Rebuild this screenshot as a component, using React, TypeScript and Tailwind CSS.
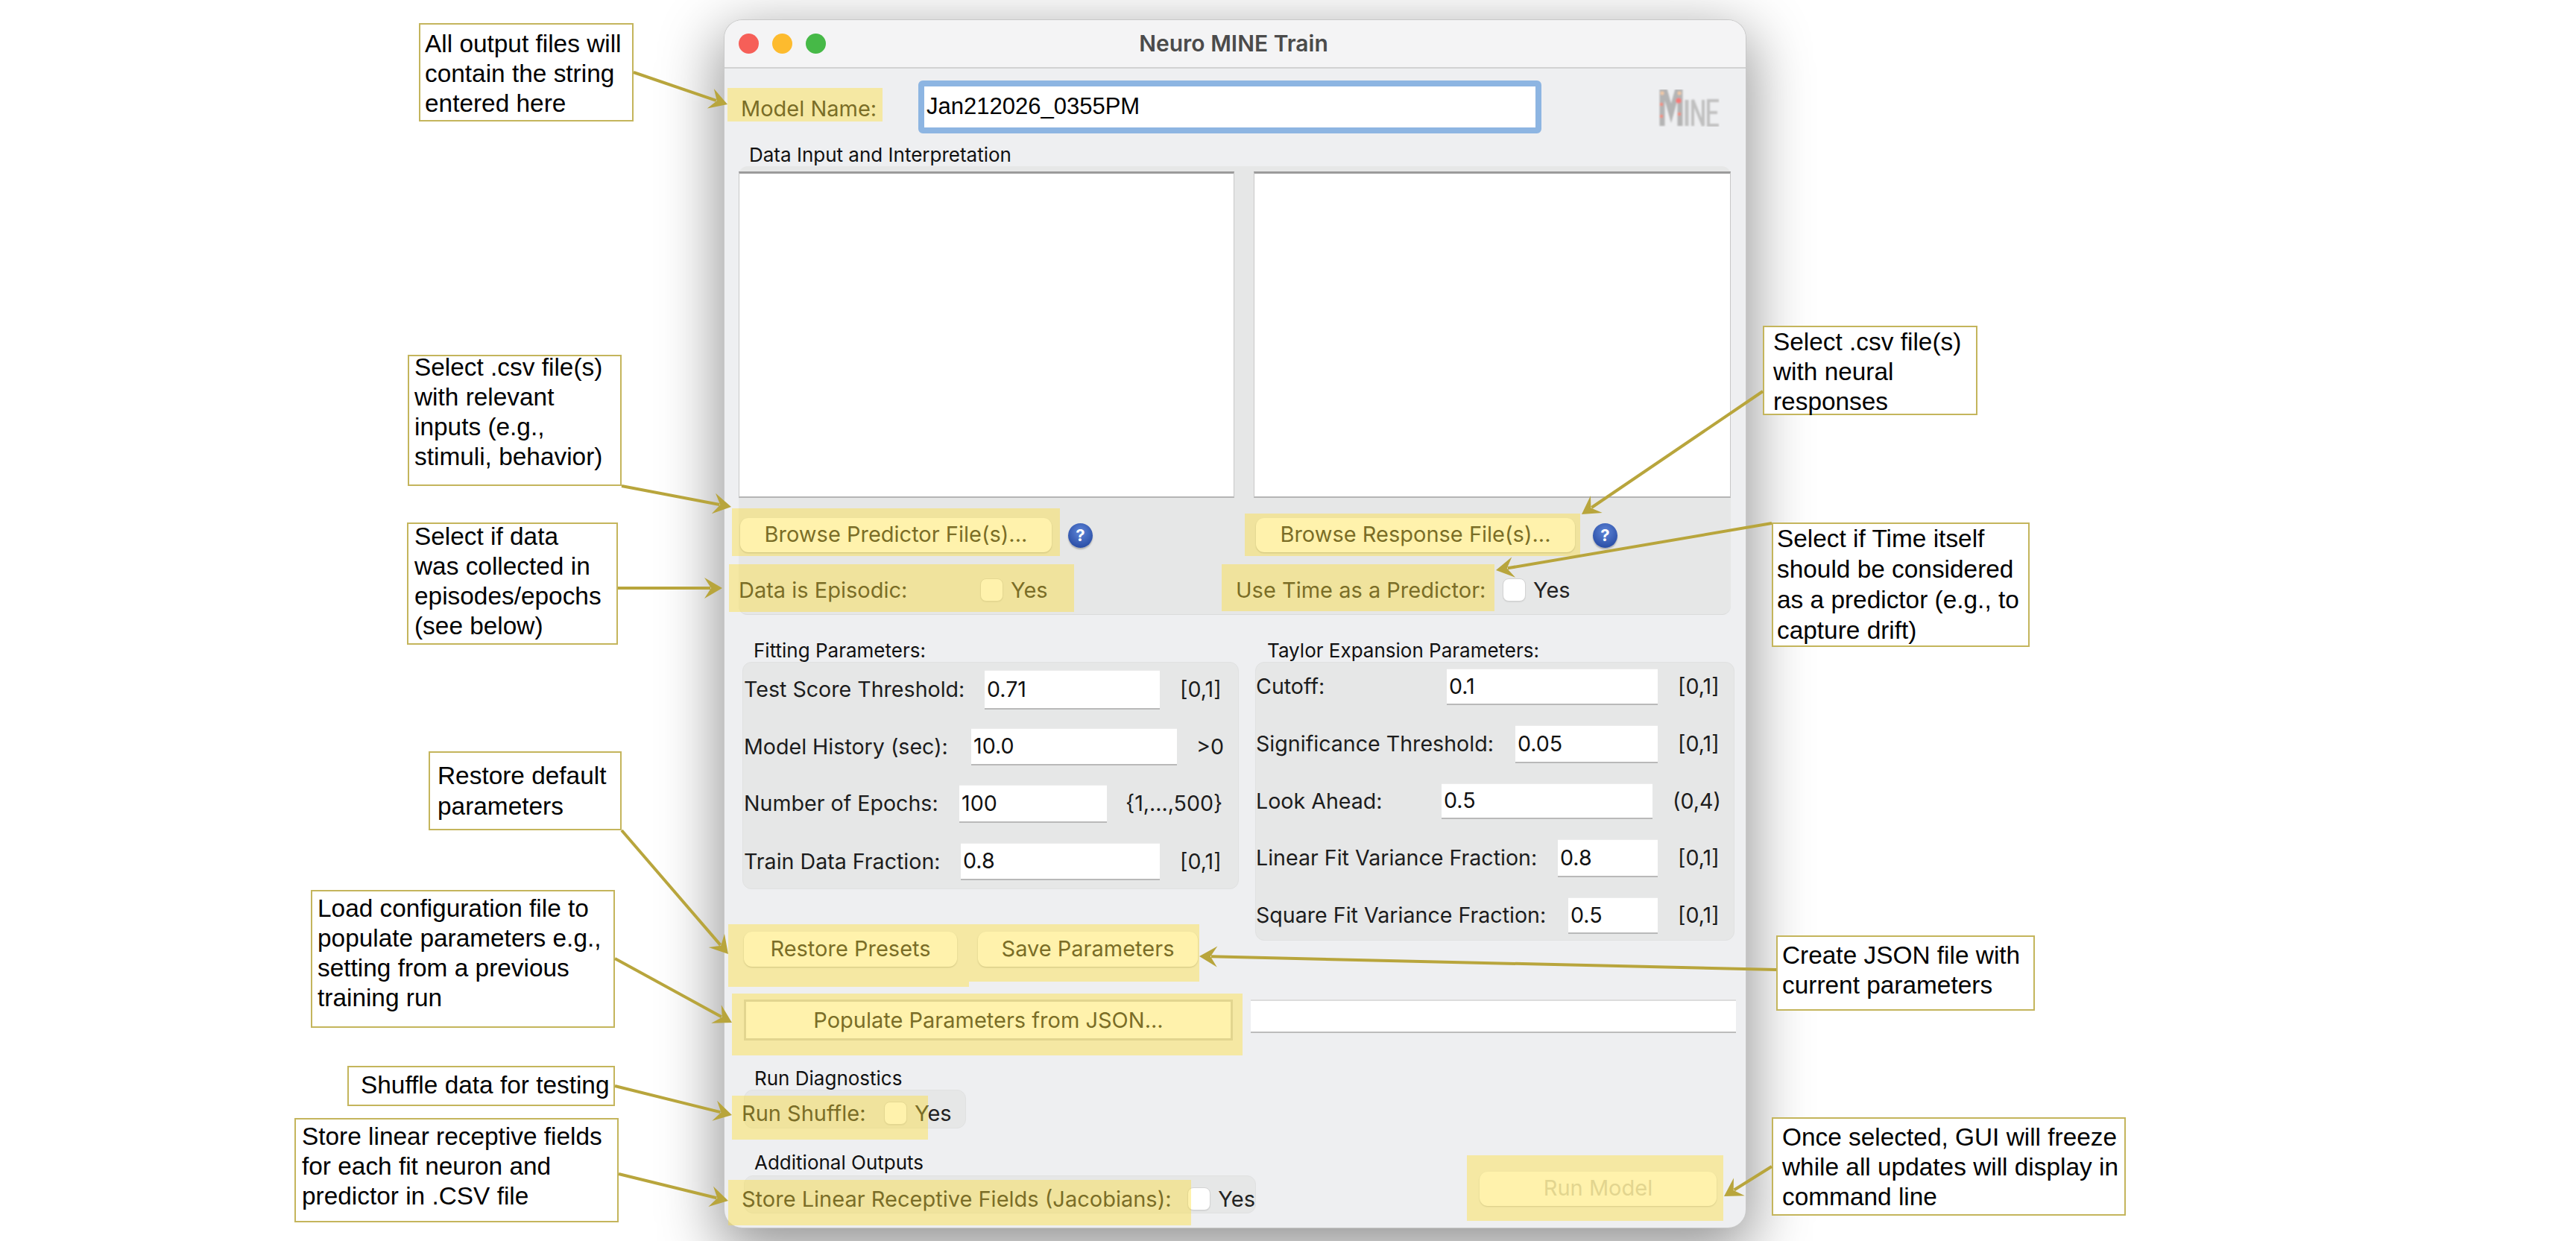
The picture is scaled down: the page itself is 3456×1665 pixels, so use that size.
import React from "react";

const UI = "[font-family:Inter,sans-serif]";
const ARIAL = "[font-family:'Liberation_Sans',Arial,sans-serif]";

type Row = { label: string; value: string; suffix: string; row: string; labelW: string; input: string; suffixC: string };

const fitting: Row[] = [
  { label: "Test Score Threshold:", value: "0.71", suffix: "[0,1]", row: "", labelW: "w-[324px] pl-[1px]", input: "w-[235px] h-[53px]", suffixC: "ml-[27px]" },
  { label: "Model History (sec):", value: "10.0", suffix: ">0", row: "mt-[25px]", labelW: "w-[306px] pl-[1px]", input: "w-[276px] h-[50px]", suffixC: "ml-[26px]" },
  { label: "Number of Epochs:", value: "100", suffix: "{1,...,500}", row: "mt-[26px]", labelW: "w-[290px] pl-[1px]", input: "w-[198px] h-[51px]", suffixC: "ml-[25px]" },
  { label: "Train Data Fraction:", value: "0.8", suffix: "[0,1]", row: "mt-[27px]", labelW: "w-[292px] pl-[1px]", input: "w-[267px] h-[50px]", suffixC: "ml-[27px]" },
];

const taylor: Row[] = [
  { label: "Cutoff:", value: "0.1", suffix: "[0,1]", row: "", labelW: "w-[256px]", input: "w-[283px] h-[49px]", suffixC: "ml-[27px]" },
  { label: "Significance Threshold:", value: "0.05", suffix: "[0,1]", row: "mt-[27px]", labelW: "w-[348px]", input: "w-[191px] h-[51px]", suffixC: "ml-[27px]" },
  { label: "Look Ahead:", value: "0.5", suffix: "(0,4)", row: "mt-[27px]", labelW: "w-[249px]", input: "w-[283px] h-[48px]", suffixC: "ml-[27px]" },
  { label: "Linear Fit Variance Fraction:", value: "0.8", suffix: "[0,1]", row: "mt-[27px]", labelW: "w-[405px]", input: "w-[134px] h-[51px]", suffixC: "ml-[27px]" },
  { label: "Square Fit Variance Fraction:", value: "0.5", suffix: "[0,1]", row: "mt-[27px]", labelW: "w-[419px]", input: "w-[120px] h-[49px]", suffixC: "ml-[27px]" },
];

const highlights = [
  "left-[976px] top-[118px] w-[208px] h-[45px]",
  "left-[982px] top-[682px] w-[440px] h-[64px]",
  "left-[978px] top-[757px] w-[463px] h-[64px]",
  "left-[1670px] top-[689px] w-[450px] h-[57px]",
  "left-[1639px] top-[757px] w-[366px] h-[63px]",
  "left-[977px] top-[1240px] w-[323px] h-[84px]",
  "left-[1300px] top-[1240px] w-[309px] h-[77px]",
  "left-[982px] top-[1333px] w-[685px] h-[83px]",
  "left-[982px] top-[1470px] w-[263px] h-[59px]",
  "left-[977px] top-[1583px] w-[621px] h-[61px]",
  "left-[1968px] top-[1550px] w-[344px] h-[88px]",
];

const callouts = [
  { box: "left-[562px] top-[31px] w-[288px] h-[132px]", text: "mt-[6px] ml-[6px] leading-[40px]", lines: ["All output files will", "contain the string", "entered here"] },
  { box: "left-[547px] top-[476px] w-[287px] h-[176px]", text: "-mt-[5px] ml-[7px] leading-[40px]", lines: ["Select .csv file(s)", "with relevant", "inputs (e.g.,", "stimuli, behavior)"] },
  { box: "left-[546px] top-[701px] w-[283px] h-[164px]", text: "-mt-[3px] ml-[8px] leading-[40px]", lines: ["Select if data", "was collected in", "episodes/epochs", "(see below)"] },
  { box: "left-[575px] top-[1008px] w-[259px] h-[106px]", text: "mt-[10px] ml-[10px] leading-[41px]", lines: ["Restore default", "parameters"] },
  { box: "left-[417px] top-[1194px] w-[408px] h-[185px]", text: "mt-[3px] ml-[7px] leading-[40px]", lines: ["Load configuration file to", "populate parameters e.g.,", "setting from a previous", "training run"] },
  { box: "left-[466px] top-[1430px] w-[359px] h-[54px]", text: "mt-[4px] ml-[16px] leading-[40px]", lines: ["Shuffle data for testing"] },
  { box: "left-[395px] top-[1500px] w-[435px] h-[140px]", text: "mt-[3px] ml-[8px] leading-[40px]", lines: ["Store linear receptive fields", "for each fit neuron and", "predictor in .CSV file"] },
  { box: "left-[2365px] top-[437px] w-[288px] h-[120px]", text: "mt-0 ml-[12px] leading-[40px]", lines: ["Select .csv file(s)", "with neural", "responses"] },
  { box: "left-[2377px] top-[701px] w-[346px] h-[167px]", text: "-mt-[1px] ml-[5px] leading-[41px]", lines: ["Select if Time itself", "should be considered", "as a predictor (e.g., to", "capture drift)"] },
  { box: "left-[2383px] top-[1255px] w-[347px] h-[101px]", text: "mt-[5px] ml-[6px] leading-[40px]", lines: ["Create JSON file with", "current parameters"] },
  { box: "left-[2377px] top-[1499px] w-[475px] h-[132px]", text: "mt-[5px] ml-[12px] leading-[40px]", lines: ["Once selected, GUI will freeze", "while all updates will display in", "command line"] },
];

const arrows: [number, number, number, number][] = [
  [850, 97, 976, 140],
  [834, 652, 981, 680],
  [829, 789, 969, 789],
  [2365, 525, 2122, 690],
  [2377, 702, 2007, 765],
  [834, 1114, 977, 1280],
  [825, 1286, 982, 1372],
  [825, 1457, 982, 1496],
  [830, 1575, 977, 1611],
  [2383, 1301, 1609, 1283],
  [2377, 1565, 2313, 1605],
];

function headPoints(x1: number, y1: number, x2: number, y2: number) {
  const len = Math.hypot(x2 - x1, y2 - y1);
  const ux = (x2 - x1) / len;
  const uy = (y2 - y1) / len;
  const px = -uy;
  const py = ux;
  const back = 24;
  const half = 14;
  const notch = 15;
  const a = [x2 - ux * back + px * half, y2 - uy * back + py * half];
  const b = [x2 - ux * back - px * half, y2 - uy * back - py * half];
  const n = [x2 - ux * notch, y2 - uy * notch];
  return `${x2},${y2} ${a[0]},${a[1]} ${n[0]},${n[1]} ${b[0]},${b[1]}`;
}

function Field({ value, className }: { value: string; className: string }) {
  return (
    <div className={`${className} box-border bg-white border-b-[2px] border-b-[#b9b9b9] border-t border-t-[#ececec] pl-[3px] flex items-center text-[28.6px] text-[#111] ${UI}`}>
      {value}
    </div>
  );
}

function ParamRow({ r }: { r: Row }) {
  return (
    <div className={`flex items-center ${r.row}`}>
      <div className={`${r.labelW} text-[28.6px] text-[#1c1c1c] whitespace-nowrap`}>{r.label}</div>
      <Field value={r.value} className={r.input} />
      <div className={`${r.suffixC} text-[28.6px] text-[#1c1c1c] whitespace-nowrap`}>{r.suffix}</div>
    </div>
  );
}

function Pill({ children, className }: { children: React.ReactNode; className: string }) {
  return (
    <div className={`${className} box-border pb-[2px] rounded-[11px] bg-white shadow-[0_1px_2px_rgba(0,0,0,0.25)] flex items-center justify-center text-[29px] text-[#222] whitespace-nowrap`}>
      {children}
    </div>
  );
}

function Check() {
  return (
    <div className="flex items-center">
      <div className="w-[31px] h-[31px] rounded-[8px] border border-[#d4d4d4] bg-white shadow-[0_1px_1px_rgba(0,0,0,0.08)]" />
      <span className="ml-[10px] text-[29px] text-[#222]">Yes</span>
    </div>
  );
}

function Help() {
  return (
    <div className="w-[33px] h-[33px] rounded-full bg-[radial-gradient(circle_at_50%_35%,#5f86d8,#2c50a8_75%)] shadow-[0_2px_2px_rgba(0,0,0,0.25)] flex items-center justify-center text-white font-bold text-[22px] leading-none">
      ?
    </div>
  );
}

function Logo() {
  return (
    <svg width="82" height="50" viewBox="0 0 82 50" className="block">
      <defs>
        <filter id="lb" x="-10%" y="-10%" width="120%" height="120%">
          <feGaussianBlur stdDeviation="1.2" />
        </filter>
      </defs>
      <g filter="url(#lb)">
        <path d="M5 49V3H9L17 32L25 3H29V49" fill="none" stroke="#b4b4b4" strokeWidth="7" />
        <circle cx="4" cy="20" r="2.2" fill="#f58a7c" />
        <circle cx="4" cy="36" r="2.2" fill="#f58a7c" />
        <circle cx="27" cy="15" r="3.6" fill="#f77a78" />
        <circle cx="28" cy="33" r="2.2" fill="#f58a7c" />
        <circle cx="5" cy="5" r="2.5" fill="#f3c9a4" />
        <circle cx="28" cy="5" r="2.5" fill="#f3c9a4" />
        <path d="M38 14V49" stroke="#c0c0c0" strokeWidth="5" fill="none" />
        <path d="M46 49V14L60 49V14" stroke="#c0c0c0" strokeWidth="4" fill="none" />
        <path d="M81 15H67V48H81M67 31H79" stroke="#c0c0c0" strokeWidth="4" fill="none" />
      </g>
    </svg>
  );
}

export default function App() {
  return (
    <div className="relative w-[3456px] h-[1665px] overflow-hidden bg-white">
      <div className="pt-[27px] pl-[972px]">
        <div className={`w-[1370px] h-[1620px] rounded-[24px] bg-[#eeeff1] overflow-hidden shadow-[0_0_0_1px_#c9c9c9,0_24px_80px_8px_rgba(0,0,0,0.42)] ${UI}`}>
          {/* title bar */}
          <div className="h-[65px] box-border bg-[#f4f4f5] border-b-[2px] border-b-[#d2d2d2] grid grid-cols-[1fr_auto_1fr] items-center">
            <div className="flex items-center gap-[18px] pl-[19px]">
              <span className="w-[27px] h-[27px] rounded-full bg-[#f65f58]" />
              <span className="w-[27px] h-[27px] rounded-full bg-[#fdbb2e]" />
              <span className="w-[27px] h-[27px] rounded-full bg-[#46b947]" />
            </div>
            <div className="-ml-[4px] text-[30px] font-semibold text-[#4b4b4b]">Neuro MINE Train</div>
            <div />
          </div>

          {/* model name */}
          <div className="mt-[16px] h-[71px] flex items-center">
            <div className="w-[260px] pl-[22px] text-[29px] text-[#222] pt-[4px] whitespace-nowrap">Model Name:</div>
            <div className="w-[836px] h-[71px] box-border rounded-[6px] border-[8px] border-[#8db5e2] bg-white flex items-center pl-[3px]">
              <span className={`text-[31px] text-black ${ARIAL}`}>Jan212026_0355PM</span>
            </div>
            <div className="ml-auto mr-[35px] mt-[2px]">
              <Logo />
            </div>
          </div>

          {/* data section */}
          <div className="mt-[17px] ml-[33px] text-[26px] leading-[24px] pb-[3px] text-[#111]">Data Input and Interpretation</div>
          <div className="ml-[19px] w-[1331px] h-[602px] box-border rounded-[12px] bg-[#e6e7e7] border-b border-b-[#dadbdb] pt-[7px]">
            <div className="flex gap-[26px]">
              <div className="w-[665px] h-[438px] box-border bg-white border-t-[3px] border-t-[#9b9b9b] border-x border-x-[#c8c8c8] border-b-[2px] border-b-[#b5b5b5]" />
              <div className="w-[640px] h-[438px] box-border bg-white border-t-[3px] border-t-[#9b9b9b] border-x border-x-[#c8c8c8] border-b-[2px] border-b-[#b5b5b5]" />
            </div>
            <div className="mt-[27px] flex items-center">
              <Pill className="ml-[2px] w-[418px] h-[46px]">Browse Predictor File(s)...</Pill>
              <div className="ml-[22px]"><Help /></div>
              <Pill className="ml-[219px] w-[428px] h-[46px]">Browse Response File(s)...</Pill>
              <div className="ml-[24px]"><Help /></div>
            </div>
            <div className="mt-[29px] flex items-center text-[29px] text-[#222]">
              <div className="w-[324px]">Data is Episodic:</div>
              <div className="w-[343px]"><Check /></div>
              <div className="w-[358px] whitespace-nowrap">Use Time as a Predictor:</div>
              <Check />
            </div>
          </div>

          {/* parameter columns */}
          <div className="mt-[33px] ml-[24px] flex items-start gap-[22px]">
            <div className="w-[666px]">
              <div className="ml-[15px] text-[26px] leading-[30px] text-[#111]">Fitting Parameters:</div>
              <div className="h-[305px] rounded-[12px] bg-[#e6e7e7] border border-[#e0e1e1] pt-[10px] box-border">
                {fitting.map((r) => (
                  <ParamRow key={r.label} r={r} />
                ))}
              </div>
              <div className="mt-[57px] ml-[2px] flex gap-[28px]">
                <Pill className="w-[286px] h-[47px]">Restore Presets</Pill>
                <Pill className="w-[295px] h-[47px]">Save Parameters</Pill>
              </div>
            </div>
            <div className="w-[643px]">
              <div className="ml-[16px] text-[26px] leading-[30px] text-[#111]">Taylor Expansion Parameters:</div>
              <div className="h-[374px] rounded-[12px] bg-[#e6e7e7] border border-[#e0e1e1] pt-[8px] box-border">
                {taylor.map((r) => (
                  <ParamRow key={r.label} r={r} />
                ))}
              </div>
            </div>
          </div>

          {/* populate row */}
          <div className="mt-[44px] ml-[26px] flex items-start">
            <div className="w-[656px] h-[55px] box-border border-[3px] border-[#cfcfcf] bg-white flex items-center justify-center text-[29px] text-[#222]">
              Populate Parameters from JSON...
            </div>
            <div className="ml-[24px] w-[651px] h-[45px] box-border bg-white border-t-[2px] border-t-[#dcdcdc] border-b-[2px] border-b-[#bcbcbc]" />
          </div>

          {/* diagnostics */}
          <div className="mt-[36px] ml-[40px] text-[26px] leading-[30px] text-[#111]">Run Diagnostics</div>
          <div className="ml-[26px] w-[298px] h-[52px] rounded-[12px] bg-[#e6e7e7] border border-[#e0e1e1] box-border flex items-center pt-[11px]">
            <div className="-ml-[4px] w-[191px] text-[29px] text-[#222]">Run Shuffle:</div>
            <Check />
          </div>

          {/* outputs + run */}
          <div className="mt-[33px] flex items-end">
            <div className="ml-[26px]">
              <div className="ml-[14px] text-[26px] leading-[26px] pb-[4px] text-[#111]">Additional Outputs</div>
              <div className="w-[687px] h-[51px] rounded-[12px] bg-[#e6e7e7] border border-[#e0e1e1] box-border flex items-center pt-[12px]">
                <div className="-ml-[4px] w-[600px] text-[29px] text-[#222] whitespace-nowrap">Store Linear Receptive Fields (Jacobians):</div>
                <Check />
              </div>
            </div>
            <div className="ml-auto mr-[39px] mb-[10px] w-[318px] h-[46px] box-border pb-[3px] rounded-[11px] bg-white shadow-[0_1px_2px_rgba(0,0,0,0.2)] flex items-center justify-center text-[29px] text-[#cfcfcf]">
              Run Model
            </div>
          </div>
        </div>
      </div>

      {/* yellow highlight overlays */}
      {highlights.map((h) => (
        <div key={h} className={`absolute ${h} bg-[#ffde30]/40`} />
      ))}

      {/* callouts */}
      {callouts.map((c) => (
        <div key={c.box} className={`absolute ${c.box} box-border bg-white border-2 border-[#c4b55c] text-[33.4px] text-black ${ARIAL}`}>
          <div className={c.text}>
            {c.lines.map((l) => (
              <div key={l} className="whitespace-nowrap">{l}</div>
            ))}
          </div>
        </div>
      ))}

      {/* arrows */}
      <svg width="3456" height="1665" viewBox="0 0 3456 1665" className="absolute inset-0 pointer-events-none">
        {arrows.map(([x1, y1, x2, y2]) => {
          const len = Math.hypot(x2 - x1, y2 - y1);
          const ex = x2 - ((x2 - x1) / len) * 16;
          const ey = y2 - ((y2 - y1) / len) * 16;
          return (
            <g key={`${x1}-${y1}`}>
              <line x1={x1} y1={y1} x2={ex} y2={ey} stroke="#b8a53c" strokeWidth="4" />
              <polygon points={headPoints(x1, y1, x2, y2)} fill="#b8a53c" />
            </g>
          );
        })}
      </svg>
    </div>
  );
}
